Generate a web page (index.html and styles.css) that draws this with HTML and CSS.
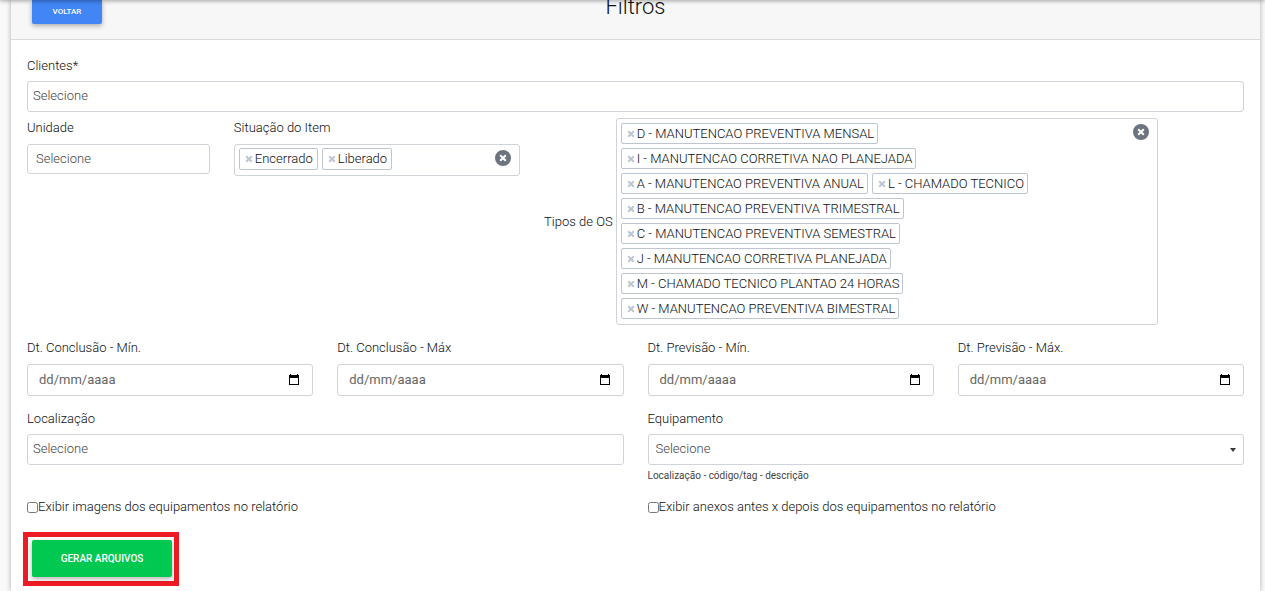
FILE: index.html
```html
<!DOCTYPE html>
<html lang="pt-BR">
<head>
<meta charset="utf-8">
<title>Filtros</title>
<link rel="stylesheet" href="styles.css">
</head>
<body>
<svg class="sprite" aria-hidden="true">
  <symbol id="calendar" viewBox="0 0 12 12"><path fill="currentColor" d="M2 0h1v1h6V0h1v1h1v10H1V1H2zM2 4v6h8V4z"/></symbol>
  <symbol id="times" viewBox="0 0 8 8"><path d="M1.200 1.200l5.600 5.600M6.800 1.200L1.200 6.800" fill="none" stroke="currentColor" stroke-width="2"/></symbol>
</svg>
<div class="topbar"></div>
<main class="card">
  <header class="card-header">
    <button class="btn btn-back" type="button">VOLTAR</button>
    <h1 class="title">Filtros</h1>
  </header>
  <form class="card-body">
    <div class="row">
      <div class="field field-tight span-12">
        <label for="clientes">Clientes*</label>
        <input class="control search" id="clientes" type="text" placeholder="Selecione">
      </div>
    </div>
    <div class="row row-types">
      <div class="field span-2">
        <label for="unidade">Unidade</label>
        <input class="control unit" id="unidade" type="text" placeholder="Selecione">
      </div>
      <div class="field span-3">
        <span class="label" id="situacao">Situação do Item</span>
        <div class="multi multi-status" role="group" aria-labelledby="situacao">
          <ul class="chips">
            <li class="chip"><button type="button" aria-label="Remover"><svg><use href="#times"/></svg></button>Encerrado</li>
            <li class="chip"><button type="button" aria-label="Remover"><svg><use href="#times"/></svg></button>Liberado</li>
          </ul>
          <button class="clear" type="button" aria-label="Limpar"><svg><use href="#times"/></svg></button>
        </div>
      </div>
      <div class="types span-7">
        <span class="label" id="tipos">Tipos de OS</span>
        <div class="multi" role="group" aria-labelledby="tipos">
          <ul class="chips">
            <li class="chip"><button type="button" aria-label="Remover"><svg><use href="#times"/></svg></button>D - MANUTENCAO PREVENTIVA MENSAL</li>
            <li class="chip"><button type="button" aria-label="Remover"><svg><use href="#times"/></svg></button>I - MANUTENCAO CORRETIVA NAO PLANEJADA</li>
            <li class="chip"><button type="button" aria-label="Remover"><svg><use href="#times"/></svg></button>A - MANUTENCAO PREVENTIVA ANUAL</li>
            <li class="chip"><button type="button" aria-label="Remover"><svg><use href="#times"/></svg></button>L - CHAMADO TECNICO</li>
            <li class="chip"><button type="button" aria-label="Remover"><svg><use href="#times"/></svg></button>B - MANUTENCAO PREVENTIVA TRIMESTRAL</li>
            <li class="chip"><button type="button" aria-label="Remover"><svg><use href="#times"/></svg></button>C - MANUTENCAO PREVENTIVA SEMESTRAL</li>
            <li class="chip"><button type="button" aria-label="Remover"><svg><use href="#times"/></svg></button>J - MANUTENCAO CORRETIVA PLANEJADA</li>
            <li class="chip"><button type="button" aria-label="Remover"><svg><use href="#times"/></svg></button>M - CHAMADO TECNICO PLANTAO 24 HORAS</li>
            <li class="chip"><button type="button" aria-label="Remover"><svg><use href="#times"/></svg></button>W - MANUTENCAO PREVENTIVA BIMESTRAL</li>
          </ul>
          <button class="clear" type="button" aria-label="Limpar"><svg><use href="#times"/></svg></button>
        </div>
      </div>
    </div>
    <div class="row">
      <div class="field span-3">
        <label for="conc-min">Dt. Conclusão - Mín.</label>
        <div class="control date"><input id="conc-min" type="text" placeholder="dd/mm/aaaa"><button type="button" aria-label="Abrir calendário"><svg><use href="#calendar"/></svg></button></div>
      </div>
      <div class="field span-3">
        <label for="conc-max">Dt. Conclusão - Máx</label>
        <div class="control date"><input id="conc-max" type="text" placeholder="dd/mm/aaaa"><button type="button" aria-label="Abrir calendário"><svg><use href="#calendar"/></svg></button></div>
      </div>
      <div class="field span-3">
        <label for="prev-min">Dt. Previsão - Mín.</label>
        <div class="control date"><input id="prev-min" type="text" placeholder="dd/mm/aaaa"><button type="button" aria-label="Abrir calendário"><svg><use href="#calendar"/></svg></button></div>
      </div>
      <div class="field span-3">
        <label for="prev-max">Dt. Previsão - Máx.</label>
        <div class="control date"><input id="prev-max" type="text" placeholder="dd/mm/aaaa"><button type="button" aria-label="Abrir calendário"><svg><use href="#calendar"/></svg></button></div>
      </div>
    </div>
    <div class="row row-place">
      <div class="field field-tight span-6">
        <label for="local">Localização</label>
        <input class="control search" id="local" type="text" placeholder="Selecione">
      </div>
      <div class="field field-tight span-6">
        <label for="equip">Equipamento</label>
        <div class="select-wrap">
          <select class="control" id="equip"><option>Selecione</option></select>
          <svg class="caret" viewBox="0 0 6 4"><path d="M0 0h6L3 4z" fill="currentColor"/></svg>
        </div>
        <small class="help">Localização - código/tag - descrição</small>
      </div>
    </div>
    <div class="row row-checks">
      <label class="check span-6"><input type="checkbox">Exibir imagens dos equipamentos no relatório</label>
      <label class="check span-6"><input type="checkbox">Exibir anexos antes x depois dos equipamentos no relatório</label>
    </div>
    <div class="highlight">
      <button class="btn btn-submit" type="submit">GERAR ARQUIVOS</button>
    </div>
  </form>
</main>
</body>
</html>
```
FILE: styles.css
```css
* { box-sizing: border-box; }

body {
  margin: 0;
  background: #f9f9f9;
  color: #0c0f12;
  font: 300 13px/20px Roboto, sans-serif;
}

button, input, select { font: inherit; margin: 0; }
button { padding: 0; border: 0; background: none; }
.sprite { position: absolute; width: 0; height: 0; }

.topbar {
  position: fixed;
  z-index: 2;
  inset: -10px 0 auto;
  height: 10px;
  box-shadow: 0 1px 4px rgba(0, 0, 0, .35);
}

.card {
  min-height: 100vh;
  margin: 0 5px 0 11px;
  background: #fff;
  box-shadow: 0 0 5px rgba(0, 0, 0, .3);
}

.card-header {
  display: grid;
  grid-template-columns: 1fr auto 1fr;
  align-items: start;
  height: 40px;
  padding: 0 21px;
  background: #f7f7f7;
  border-bottom: 1px solid #d9dadb;
}

.title {
  margin: -6px 0 0;
  font-size: 22px;
  font-weight: 300;
  line-height: 26px;
}

.btn {
  color: #fff;
  font-weight: 500;
  box-shadow: 0 2px 5px rgba(0, 0, 0, .3);
}

.btn-back {
  width: 70px;
  height: 24px;
  border-radius: 0 0 2px 2px;
  background: #4285f4;
  font-size: 8px;
}

.card-body { padding: 16px 16px 5px; }

.row {
  display: grid;
  grid-template-columns: repeat(12, minmax(0, 1fr));
  column-gap: 24px;
  align-items: start;
}

.span-2 { grid-column: span 2; }
.span-3 { grid-column: span 3; }
.span-6 { grid-column: span 6; }
.span-7 { grid-column: span 7; }
.span-12 { grid-column: span 12; }

.row-types { margin: 6px 0 13px; }
.row-place { margin-top: 13px; }
.row-checks { margin: 16px 0 15px; }

.field { display: flex; flex-direction: column; gap: 6px; }
.field-tight { gap: 5px; }

.control, .multi {
  width: 100%;
  border: 1px solid #ced4da;
  border-radius: 3px;
  background: #fff;
  color: #444;
}

.control::placeholder { color: #444; opacity: 1; }
.search { height: 31px; padding: 0 5px 2px; }
.unit { height: 30px; padding: 0 8px 1px; }

.multi {
  display: flex;
  align-items: flex-start;
  justify-content: space-between;
  padding: 4px 8px 5px 4px;
  color: #0c0f12;
}

.chips {
  display: flex;
  flex-wrap: wrap;
  gap: 4px;
  margin: 0;
  padding: 0;
  list-style: none;
}

.chip {
  display: flex;
  align-items: center;
  height: 21px;
  padding: 0 4px;
  border: 1px solid #bdc6d0;
  border-radius: 2px;
  white-space: nowrap;
}

.chip button {
  display: flex;
  width: 11px;
  padding-left: 1px;
  color: #bdc6d0;
}

.chip svg { width: 8px; height: 8px; }
.multi-status { padding: 3px 8px 5px 4px; }
.multi-status .chip { height: 22px; }
.multi-status .clear { margin-top: 2px; }

.clear {
  display: grid;
  flex: none;
  place-items: center;
  width: 16px;
  height: 16px;
  margin-top: 1px;
  border-radius: 50%;
  background: #6c757d;
  color: #fff;
}

.clear svg { width: 8px; height: 8px; }

.types { display: flex; align-items: center; gap: 3px; }
.types .label { flex: none; }
.types .multi { flex: 0 1 542px; }
.types .chip { padding: 0 3px 0 4px; }

.date {
  display: flex;
  align-items: center;
  height: 32px;
  padding: 0 12px 0 11px;
}

.date input {
  flex: 1;
  min-width: 0;
  padding: 0;
  border: 0;
  outline: 0;
  background: none;
  font-weight: 400;
}

.date input::placeholder { color: #666; opacity: 1; }
.date button { display: flex; color: #000; }
.date svg { width: 12px; height: 12px; }

.select-wrap { display: grid; align-items: center; }
.select-wrap > * { grid-area: 1 / 1; }
.select-wrap .control { height: 31px; padding: 0 7px 2px; appearance: none; }
.caret {
  justify-self: end;
  width: 6px;
  height: 4px;
  margin-right: 8px;
  color: #343a40;
  pointer-events: none;
}

.help { font-size: 10px; font-weight: 400; line-height: 11px; color: #444; }

.check { display: flex; align-items: center; }
.check input { width: 11px; height: 11px; }

.highlight {
  width: fit-content;
  margin-left: -4px;
  padding: 3px 2px 4px 4px;
  border: 5px solid #ed1c24;
}

.btn-submit {
  display: block;
  width: 140px;
  height: 37px;
  border-radius: 2px;
  background: #00c851;
  font-size: 10px;
}
```
